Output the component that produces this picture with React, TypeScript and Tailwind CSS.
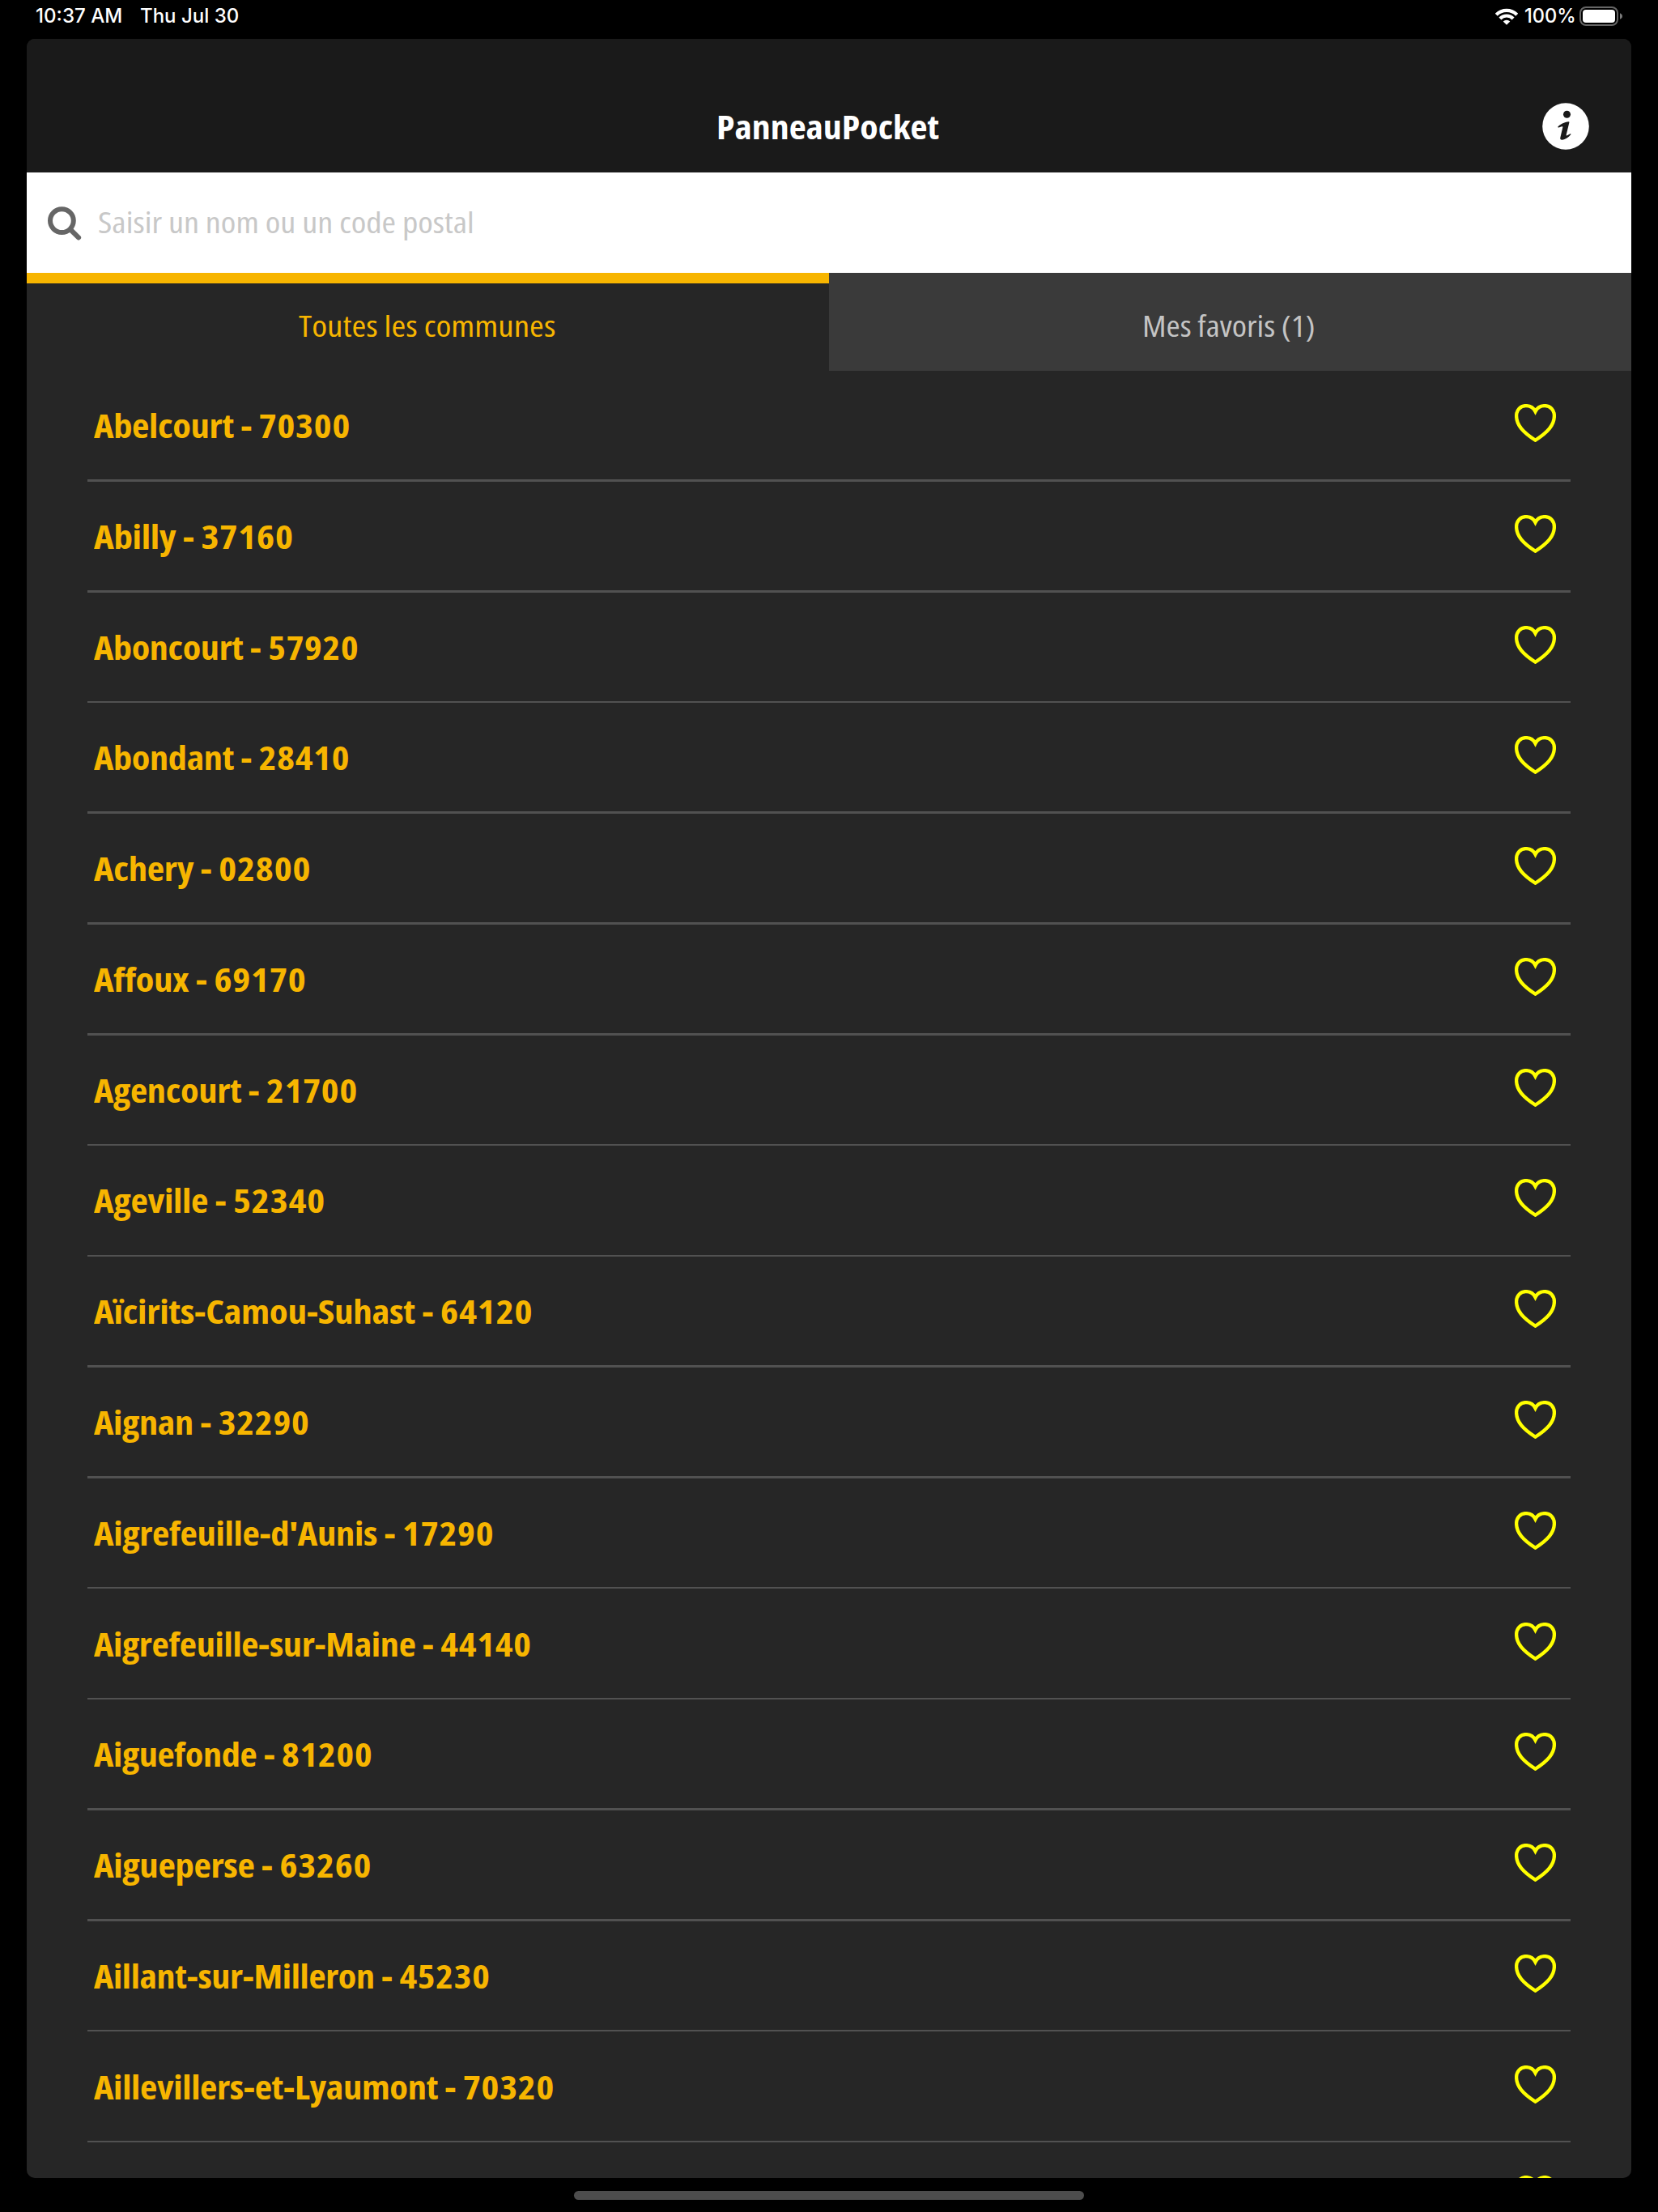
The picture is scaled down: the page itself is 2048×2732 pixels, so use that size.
import { useLayoutEffect, useRef, useState } from "react";
import type { ReactNode } from "react";

const communes: { name: string; code: string; width: number }[] = [
  { name: "Abelcourt", code: "70300", width: 317 },
  { name: "Abilly", code: "37160", width: 246.5 },
  { name: "Aboncourt", code: "57920", width: 327.5 },
  { name: "Abondant", code: "28410", width: 316 },
  { name: "Achery", code: "02800", width: 268.5 },
  { name: "Affoux", code: "69170", width: 262 },
  { name: "Agencourt", code: "21700", width: 326 },
  { name: "Ageville", code: "52340", width: 285.5 },
  { name: "Aïcirits-Camou-Suhast", code: "64120", width: 543 },
  { name: "Aignan", code: "32290", width: 267 },
  { name: "Aigrefeuille-d'Aunis", code: "17290", width: 494.5 },
  { name: "Aigrefeuille-sur-Maine", code: "44140", width: 541 },
  { name: "Aiguefonde", code: "81200", width: 345 },
  { name: "Aigueperse", code: "63260", width: 343 },
  { name: "Aillant-sur-Milleron", code: "45230", width: 489.5 },
  { name: "Aillevillers-et-Lyaumont", code: "70320", width: 569.5 },
];

/** Single line of text condensed or widened to an exact width. */
function FitText({ children, width }: { children: ReactNode; width: number }) {
  const ref = useRef<HTMLSpanElement>(null);
  const [scale, setScale] = useState(1);
  useLayoutEffect(() => {
    const measure = () => {
      if (ref.current) setScale(width / ref.current.offsetWidth);
    };
    measure();
    document.fonts?.ready.then(measure);
  }, [width]);
  return (
    <span className="block" style={{ width }}>
      <span
        ref={ref}
        className="inline-block origin-left whitespace-nowrap"
        style={{ transform: `scaleX(${scale})` }}
      >
        {children}
      </span>
    </span>
  );
}

function WifiIcon() {
  return (
    <svg className="h-[21px] w-[28px]" viewBox="0 0 28 21" fill="none" stroke="#fff" strokeWidth="4.2">
      <path d="M1.3 8.2A18 18 0 0 1 26.7 8.2" />
      <path d="M5.9 12.9A11.4 11.4 0 0 1 22.1 12.9" />
      <path d="M14 20.8L9.7 16.5A6.2 6.2 0 0 1 18.3 16.5Z" fill="#fff" stroke="none" />
    </svg>
  );
}

function BatteryIcon() {
  return (
    <svg className="h-[24px] w-[53px]" viewBox="0 0 53 24" fill="none">
      <rect x="1" y="1" width="46" height="22" rx="7" stroke="#666" strokeWidth="2" />
      <rect x="4" y="4" width="40" height="16" rx="4" fill="#fff" />
      <path d="M50 8.2c1.800 .8 3 2.200 3 3.800s-1.200 3-3 3.800z" fill="#7a7a7a" />
    </svg>
  );
}

function InfoIcon() {
  return (
    <svg className="h-[58px] w-[58px]" viewBox="0 0 58 58">
      <circle cx="29" cy="29" r="28.800" fill="#fff" />
      <circle cx="30.500" cy="14.300" r="4.500" fill="#1a1a1a" />
      <path
        d="M19.500 29.300C21.500 27.300 27.500 23.600 32.800 23.300C33.300 23.300 33.500 23.700 33.400 24.200L29.700 39.500C29.500 40.500 30 40.700 30.800 40.300L34.600 38.200C35.300 37.900 35.700 38.700 35.200 39.300C33 42 28.500 45.600 24.500 45.800C22.800 45.900 21.900 44.800 22.300 43L25.300 30.200C25.500 29.200 25 29 24.200 29.200L20.500 30.500C19.600 30.800 19 29.900 19.500 29.300Z"
        fill="#1a1a1a"
      />
    </svg>
  );
}

function SearchIcon() {
  return (
    <svg className="h-[42px] w-[42px]" viewBox="0 0 42 42" fill="none" stroke="#666" strokeLinecap="round">
      <circle cx="17.400" cy="17.600" r="14.400" strokeWidth="6" />
      <path d="M28.500 29L38 38.400" strokeWidth="6.200" />
    </svg>
  );
}

function HeartIcon() {
  return (
    <svg className="h-[47px] w-[51px]" viewBox="0 0 51 47" fill="none" stroke="#ffff00" strokeWidth="4.300">
      <path d="M25.500 9.200C23.300 4.800 18.700 2.100 13.700 2.100C7 2.100 2.100 7.600 2.100 14.600C2.100 25.800 10 34.700 25.500 44.700C41 34.700 48.900 25.800 48.900 14.600C48.900 7.600 44 2.100 37.300 2.100C32.300 2.100 27.700 4.800 25.500 9.200Z" />
    </svg>
  );
}

export default function App() {
  return (
    <div className="flex h-[2732px] w-[2048px] flex-col overflow-hidden bg-black font-['Open_Sans',sans-serif]">
      <div className="flex h-[48px] shrink-0 items-start justify-between pr-[44px] pl-[44px] font-['Inter',sans-serif] text-[24px] leading-[39px] font-[450] text-white">
        <div className="flex gap-[21.500px]">
          <FitText width={107.5}>10:37 AM</FitText>
          <FitText width={122}>Thu Jul 30</FitText>
        </div>
        <div className="flex">
          <div className="pt-[10px]">
            <WifiIcon />
          </div>
          <div className="pl-[8px]">
            <FitText width={64}>100%</FitText>
          </div>
          <div className="pt-[8px] pl-[4px]">
            <BatteryIcon />
          </div>
        </div>
      </div>

      <main className="mx-[33px] flex h-[2642px] shrink-0 flex-col overflow-hidden rounded-[10px] bg-[#262626]">
        <header className="grid h-[165px] shrink-0 grid-cols-[1fr_auto_1fr] items-end bg-[#1a1a1a] pb-[28px] text-[41px] leading-[58px] font-bold text-white [font-stretch:84%]">
          <div />
          <div className="pr-[4px]">
            <FitText width={275}>PanneauPocket</FitText>
          </div>
          <div className="flex justify-end pr-[52px]">
            <InfoIcon />
          </div>
        </header>

        <div className="flex h-[124px] shrink-0 items-center bg-white pl-[26px] text-[36.800px] leading-[50px] text-[#c8c8c8] [font-stretch:80%]">
          <div className="pt-[2px]">
            <SearchIcon />
          </div>
          <div className="pb-[3px] pl-[20px]">
            <FitText width={465}>Saisir un nom ou un code postal</FitText>
          </div>
        </div>

        <nav className="grid h-[121px] shrink-0 grid-cols-2 text-[36.500px] leading-[50px] [font-stretch:80%]">
          <div className="flex items-center justify-center border-t-[13px] border-[#f7b500] pr-[2px] pb-[5px] text-[#f7b500]">
            <FitText width={317}>Toutes les communes</FitText>
          </div>
          <div className="flex items-center justify-center bg-[#3a3a3a] pt-[8px] pr-[4px] text-[#c4c4c4]">
            <FitText width={214}>Mes favoris (1)</FitText>
          </div>
        </nav>

        <ul className="mr-[75px] ml-[75px] text-[41px] leading-[56px] font-bold text-[#f7b500] [font-stretch:84%]">
          {communes.map((c) => (
            <li key={c.name} className="flex h-[136.770px] flex-col">
              <div className="flex h-[134.170px] items-center justify-between pr-[18px] pl-[8px]">
                <FitText width={c.width}>
                  <span className="tracking-[-0.300px]">{c.name}</span> - <span className="tracking-[0.700px]">{c.code}</span>
                </FitText>
                <div className="pb-[5px]">
                  <HeartIcon />
                </div>
              </div>
              <div className="h-[2.600px] bg-[#515151]" />
            </li>
          ))}
          <li className="flex h-[134.170px] items-center justify-end pr-[18px]">
            <div className="pb-[5px]">
              <HeartIcon />
            </div>
          </li>
        </ul>
      </main>

      <div className="mx-auto mt-[16px] h-[11px] w-[630px] shrink-0 rounded-full bg-[#4d4d4d]" />
    </div>
  );
}
